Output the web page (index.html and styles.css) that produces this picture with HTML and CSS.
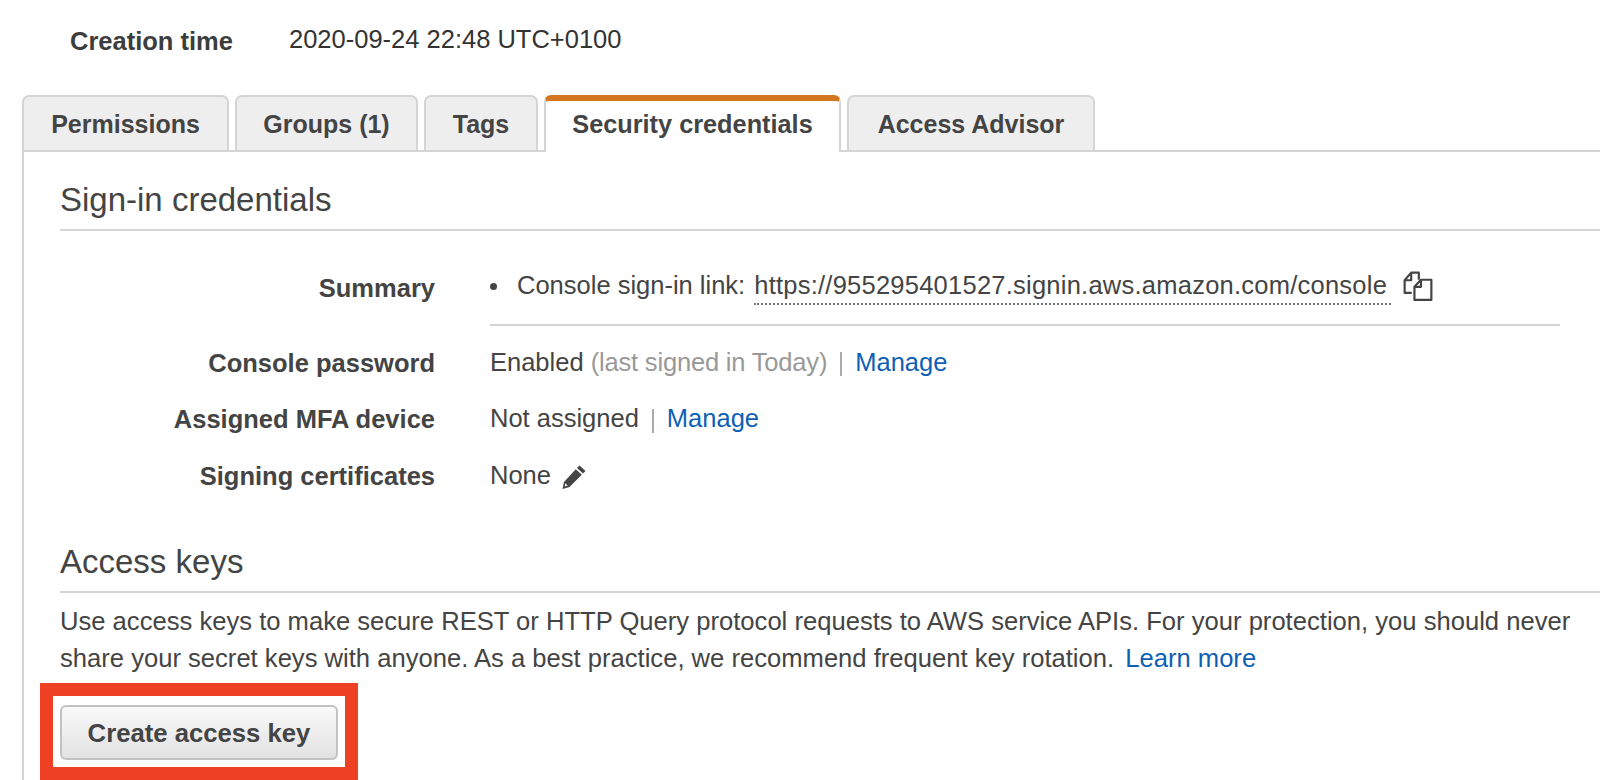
FILE: index.html
```html
<!DOCTYPE html>
<html lang="en">
<head>
  <meta charset="UTF-8" />
  <title>Security credentials</title>
  <link rel="stylesheet" href="styles.css">
</head>
<body>
  <div class="creation-row">
    <span class="creation-label">Creation time</span>
    <span class="creation-value">2020-09-24 22:48 UTC+0100</span>
  </div>

  <div class="tabs">
    <div class="tab tab-permissions">Permissions</div>
    <div class="tab tab-groups">Groups (1)</div>
    <div class="tab tab-tags">Tags</div>
    <div class="tab tab-security active">Security credentials</div>
    <div class="tab tab-advisor">Access Advisor</div>
  </div>

  <div class="panel">
    <h2 class="section-title">Sign-in credentials</h2>

    <div class="info-row summary-row">
      <div class="info-label">Summary</div>
      <div class="info-value summary-value">
        <span class="bullet"></span>
        <span>Console sign-in link:</span>
        <span class="signin-link">https://955295401527.signin.aws.amazon.com/console</span>
        <svg class="copy-icon" width="30" height="30" viewBox="2 1 27.500 27.500" fill="none" stroke="#444" stroke-width="2" stroke-linejoin="round">
          <path d="M10 21H3.500V9.500L9.500 2.500H16.500V9"/>
          <path d="M9.500 3V9.500H3.500"/>
          <path d="M12.500 27.500V15.500L18.500 9H28V27.500Z"/>
          <path d="M18.500 9.500V15.500H12.500"/>
        </svg>
      </div>
    </div>

    <div class="info-row">
      <div class="info-label">Console password</div>
      <div class="info-value">Enabled <span class="muted">(last signed in Today)</span><span class="divider"></span><a class="link">Manage</a></div>
    </div>
    <div class="info-row">
      <div class="info-label">Assigned MFA device</div>
      <div class="info-value">Not assigned<span class="divider"></span><a class="link">Manage</a></div>
    </div>
    <div class="info-row">
      <div class="info-label">Signing certificates</div>
      <div class="info-value">None<svg class="edit-icon" width="26" height="26" viewBox="0 0 26 26" fill="#444">
          <path d="M18.500 1.500L24.500 7L22 9.500L16 4Z"/>
          <path d="M14.800 5.200L20.800 10.800L8.500 23L1.500 25L3 18Z"/>
          <path d="M4.300 19.200L6.700 21.500L3.700 22.600Z" fill="#fff"/>
        </svg>
      </div>
    </div>

    <h2 class="section-title access-title">Access keys</h2>
    <p class="access-text">Use access keys to make secure REST or HTTP Query protocol requests to AWS service APIs. For your protection, you should never share your secret keys with anyone. As a best practice, we recommend frequent key rotation. <a class="link learn-more">Learn more</a></p>

    <div class="create-wrap">
      <button class="create-btn">Create access key</button>
      <div class="highlight"></div>
    </div>
  </div>
</body>
</html>
```

FILE: styles.css
```css
* {
  box-sizing: border-box;
  margin: 0;
  padding: 0;
}

html, body {
  height: 780px;
  overflow: hidden;
}

body {
  font-family: 'Liberation Sans', Arial, sans-serif;
  font-size: 25.500px;
  color: #444;
  background: #fff;
}

.creation-row {
  display: flex;
  height: 95px;
  padding: 24px 0 0 70px;
  line-height: 30px;
}

.creation-label {
  width: 219px;
  font-weight: bold;
  color: #3d3d3d;
  padding-top: 2px;
}

.creation-value {
  color: #333;
}

.tabs {
  display: flex;
  gap: 6px;
  height: 55px;
  padding-left: 22px;
}

.tab {
  display: flex;
  align-items: center;
  justify-content: center;
  height: 55px;
  background: #eee;
  border: 2px solid #d5d5d5;
  border-bottom: none;
  border-radius: 7px 7px 0 0;
  font-size: 25px;
  font-weight: bold;
  color: #444;
  padding-top: 2px;
}

.tab-permissions { width: 207px; }
.tab-groups { width: 183px; }
.tab-tags { width: 114px; }
.tab-security { width: 297px; }
.tab-advisor { width: 248px; }

.tab.active {
  position: relative;
  z-index: 1;
  height: 57px;
  background: #fff;
  border-top: 6px solid #d4761f;
  padding-top: 0;
  padding-bottom: 4px;
  font-size: 25.300px;
}

.panel {
  height: 630px;
  margin-left: 22px;
  padding: 0 0 0 36px;
  border-top: 2px solid #d5d5d5;
  border-left: 2px solid #d5d5d5;
}

.section-title {
  height: 79px;
  padding-top: 29px;
  font-size: 33px;
  line-height: 38px;
  font-weight: normal;
  color: #444;
  border-bottom: 2px solid #d5d5d5;
}

.info-row {
  display: flex;
  height: 56.500px;
  align-items: center;
}

.info-label {
  width: 375px;
  text-align: right;
  font-weight: bold;
  color: #444;
}

.info-value {
  margin-left: 55px;
  margin-bottom: 2px;
  color: #444;
}

.summary-row {
  align-items: flex-start;
  height: 104px;
  padding-top: 40px;
}

.summary-row .info-label {
  margin-top: 3px;
}

.summary-value {
  display: flex;
  align-items: flex-start;
  width: 1070px;
  height: 55px;
  margin-bottom: 0;
  border-bottom: 2px solid #d5d5d5;
  white-space: nowrap;
}

.bullet {
  width: 7px;
  height: 7px;
  margin: 12px 20px 0 0;
  border-radius: 50%;
  background: #444;
}

.signin-link {
  margin-left: 9px;
  padding-right: 4px;
  height: 34px;
  letter-spacing: 0.240px;
  border-bottom: 2px dotted #777;
}

.copy-icon {
  margin: 0 0 0 12px;
}

.edit-icon {
  margin-left: 10px;
  vertical-align: middle;
}

.muted {
  color: #999;
  letter-spacing: -0.180px;
}

.divider {
  display: inline-block;
  width: 2px;
  height: 24px;
  margin: 0 13px;
  background: #aaa;
  vertical-align: middle;
}

.link {
  color: #0f5fb5;
}

.learn-more {
  margin-left: 4px;
}

.access-title {
  height: 86px;
  margin-top: 2px;
  padding-top: 36px;
}

.access-text {
  margin-top: 10px;
  font-size: 25.600px;
  line-height: 37px;
  color: #444;
}

.create-wrap {
  position: relative;
  margin-top: 28px;
}

.create-btn {
  display: block;
  width: 278px;
  height: 55px;
  padding-top: 2px;
  border: 2px solid #c2c2c2;
  border-radius: 6px;
  background: linear-gradient(to bottom, #f9f9f9, #e2e2e2);
  font-family: inherit;
  font-size: 25.700px;
  font-weight: bold;
  color: #444;
}

/* red annotation drawn over the screenshot */
.highlight {
  position: absolute;
  left: -20px;
  top: -22px;
  width: 318px;
  height: 97px;
  border: 13px solid #ee4023;
}
```
